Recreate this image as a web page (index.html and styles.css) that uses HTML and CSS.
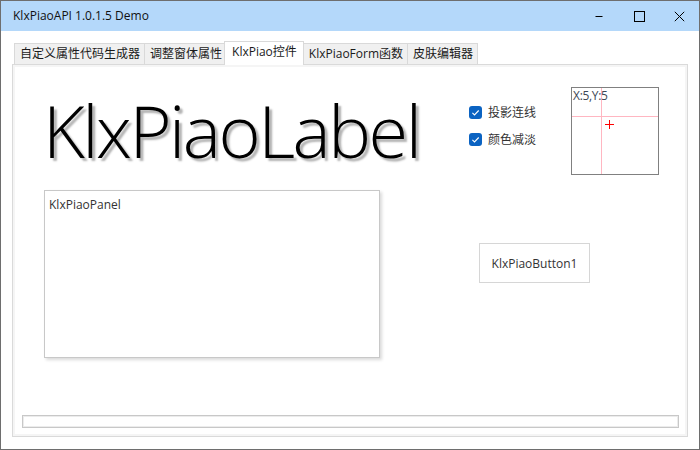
FILE: index.html
```html
<!DOCTYPE html>
<html lang="zh-CN">
<head>
<meta charset="utf-8">
<title>KlxPiaoAPI 1.0.1.5 Demo</title>
<link rel="stylesheet" href="styles.css">
</head>
<body>
<div class="window">
  <div class="titlebar">
    <div class="title">KlxPiaoAPI 1.0.1.5 Demo</div>
    <div class="controls">
      <div class="ctl"><svg width="10" height="10" viewBox="0 0 10 10"><line x1="1.5" y1="5.5" x2="8.5" y2="5.5" stroke="#000" stroke-width="1"/></svg></div>
      <div class="ctl"><svg width="11" height="11" viewBox="0 0 11 11"><rect x="0.5" y="0.5" width="10" height="10" fill="none" stroke="#000" stroke-width="1"/></svg></div>
      <div class="ctl"><svg width="11" height="11" viewBox="0 0 11 11"><path d="M0.8 0.8 L10.2 10.2 M10.2 0.8 L0.8 10.2" stroke="#000" stroke-width="1"/></svg></div>
    </div>
  </div>
  <div class="client">
    <div class="tabs">
      <div class="tab">自定义属性代码生成器</div>
      <div class="tab">调整窗体属性</div>
      <div class="tab active">KlxPiao控件</div>
      <div class="tab">KlxPiaoForm函数</div>
      <div class="tab">皮肤编辑器</div>
    </div>
    <div class="tabpage">
      <div class="row1">
        <div class="biglabel">KlxPiaoLabel</div>
        <div class="checks">
          <div class="check">
            <svg class="cb" width="13" height="13" viewBox="0 0 13 13"><rect x="0" y="0" width="13" height="13" rx="3" fill="#0b63c2"/><path d="M3.4 6.9 L5.5 8.9 L9.7 4.5" fill="none" stroke="#fff" stroke-width="1.1"/></svg>
            <span>投影连线</span>
          </div>
          <div class="check">
            <svg class="cb" width="13" height="13" viewBox="0 0 13 13"><rect x="0" y="0" width="13" height="13" rx="3" fill="#0b63c2"/><path d="M3.4 6.9 L5.5 8.9 L9.7 4.5" fill="none" stroke="#fff" stroke-width="1.1"/></svg>
            <span>颜色减淡</span>
          </div>
        </div>
        <div class="cross">
          <svg class="cross-lines" width="86" height="86" viewBox="0 0 86 86">
            <line x1="29.5" y1="0" x2="29.5" y2="86" stroke="#ffb6c1" stroke-width="1"/>
            <line x1="0" y1="28.5" x2="86" y2="28.5" stroke="#ffb6c1" stroke-width="1"/>
            <line x1="37.5" y1="32" x2="37.5" y2="41" stroke="#ff0000" stroke-width="1"/>
            <line x1="33" y1="36.5" x2="42" y2="36.5" stroke="#ff0000" stroke-width="1"/>
          </svg>
          <div class="coord">X:5,Y:5</div>
        </div>
      </div>
      <div class="row2">
        <div class="kpanel">KlxPiaoPanel</div>
        <div class="kbutton">KlxPiaoButton1</div>
      </div>
      <div class="bar"></div>
    </div>
  </div>
</div>
</body>
</html>
```

FILE: styles.css
```css
* { box-sizing: border-box; }
html, body { margin: 0; padding: 0; background: #fff; }
body {
  font-family: "Open Sans", "Noto Sans CJK SC", sans-serif;
  font-size: 12px;
  color: #000;
}
.window {
  width: 700px;
  height: 450px;
  border: 1px solid #6e6e6e;
  display: flex;
  flex-direction: column;
  background: #fff;
}
.titlebar {
  height: 30px;
  background: #b4d8fa;
  display: flex;
  align-items: center;
  flex: none;
}
.title {
  padding-left: 12px;
  flex: 1;
  line-height: 16px;
  color: #111;
}
.controls { display: flex; height: 30px; }
.ctl {
  width: 40px;
  display: flex;
  align-items: center;
  justify-content: center;
}
.ctl svg { display: block; }
.client {
  flex: 1;
  display: flex;
  flex-direction: column;
  padding: 10px 11px 12px 11px;
}
.tabs {
  display: flex;
  align-items: flex-end;
  height: 23px;
  padding-left: 2px;
  flex: none;
}
.tab {
  height: 21px;
  line-height: 19px;
  padding: 0 4px 0 5px;
  border: 1px solid #d9d9d9;
  border-bottom: none;
  background: #f0f0f0;
  margin-right: -1px;
  color: #1a1a1a;
  white-space: nowrap;
}
.tab.active {
  height: 24px;
  line-height: 20px;
  background: #fff;
  margin: 0 -1px -1px -2px;
  padding: 0 6px 0 7px;
  position: relative;
  z-index: 1;
}
.tabpage {
  height: 373px;
  border: 1px solid #dadada;
  box-shadow: inset 0 0 0 2px #f5f5f5;
  background: #fff;
  display: flex;
  flex-direction: column;
  padding-top: 22px;
}
.row1 { display: flex; align-items: flex-start; height: 88px; }
.biglabel {
  width: 426px;
  margin-left: 30px;
  margin-top: 6px;
  font-family: "Open Sans", sans-serif;
  font-weight: 300;
  font-size: 72px;
  line-height: 75px;
  letter-spacing: -2.5px;
  color: #000;
  text-shadow: 3px 3px 2px rgba(0, 0, 0, 0.3);
  white-space: nowrap;
}
.checks {
  width: 102px;
  padding-top: 19px;
  display: flex;
  flex-direction: column;
  gap: 14px;
}
.check {
  display: flex;
  align-items: center;
  gap: 6px;
  height: 13px;
  color: #333;
  line-height: 13px;
}
.cb { display: block; flex: none; }
.cross {
  width: 88px;
  height: 88px;
  border: 1px solid #808080;
  position: relative;
}
.coord {
  padding-left: 1px;
  line-height: 15px;
  letter-spacing: -0.3px;
  color: #3e4856;
  position: relative;
  z-index: 1;
}
.cross-lines { position: absolute; left: 0; top: 0; }
.row2 { display: flex; align-items: flex-start; margin-top: 15px; }
.kpanel {
  width: 336px;
  height: 168px;
  margin-left: 31px;
  border: 1px solid #c8c8c8;
  box-shadow: 2px 2px 3px rgba(0, 0, 0, 0.15);
  padding: 6px 0 0 4px;
  line-height: 16px;
  color: #333;
}
.kbutton {
  width: 111px;
  height: 40px;
  margin-left: 99px;
  margin-top: 53px;
  border: 1px solid #d6d6d6;
  display: flex;
  align-items: center;
  justify-content: center;
  color: #333;
}
.bar {
  margin: auto 8px 8px 9px;
  height: 13px;
  border: 1px solid #c8c8c8;
  box-shadow: inset 0 0 0 1px #ececec;
}
```
